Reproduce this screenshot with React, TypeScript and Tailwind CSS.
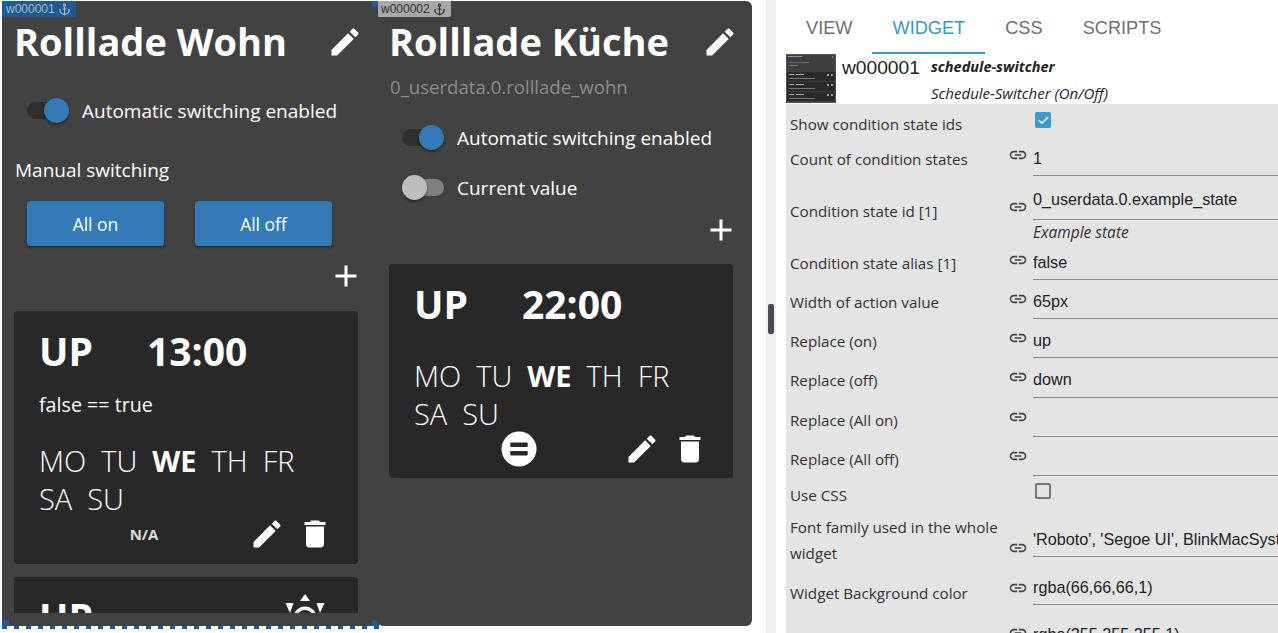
import type { ReactNode } from 'react';
import { Anchor, Check } from 'lucide-react';

const PENCIL = 'M3 17.25V21h3.75L17.81 9.94l-3.75-3.75L3 17.25zM20.71 7.04c.39-.39.39-1.02 0-1.41l-2.34-2.34c-.39-.39-1.02-.39-1.41 0l-1.83 1.83 3.75 3.75 1.83-1.83z';
const TRASH = 'M6 19c0 1.1.9 2 2 2h8c1.1 0 2-.9 2-2V7H6v12zM19 4h-3.5l-1-1h-5l-1 1H5v2h14V4z';
const PLUS = 'M19 13h-6v6h-2v-6H5v-2h6V5h2v6h6v2z';
const LINK = 'M3.9 12c0-1.71 1.39-3.1 3.1-3.1h4V7H7c-2.76 0-5 2.24-5 5s2.24 5 5 5h4v-1.9H7c-1.71 0-3.1-1.39-3.1-3.1zM8 13h8v-2H8v2zm9-6h-4v1.9h4c1.71 0 3.1 1.39 3.1 3.1s-1.39 3.1-3.1 3.1h-4V17h4c2.76 0 5-2.24 5-5s-2.24-5-5-5z';

function Icon({ d, className }: { d: string; className: string }) {
  return (
    <svg viewBox="0 0 24 24" fill="currentColor" className={className}>
      <path d={d} />
    </svg>
  );
}

function Toggle({ on }: { on: boolean }) {
  return (
    <div className="relative h-[25px] w-[42px] shrink-0">
      <div className={`absolute left-0 right-0 top-[4px] h-[17px] rounded-full ${on ? 'bg-[#2f2f2f]' : 'bg-[#808080]'}`} />
      <div
        className={`absolute top-0 h-[25px] w-[25px] rounded-full shadow-[0_2px_3px_rgba(0,0,0,0.4)] ${
          on ? 'right-0 bg-[#337ab7]' : 'left-0 bg-[#bdbdbd]'
        }`}
      />
    </div>
  );
}

function ToggleRow({ on, label }: { on: boolean; label: string }) {
  return (
    <div className="flex h-[50px] items-center gap-[13px] pl-[25px] text-[19px] text-white">
      <Toggle on={on} />
      <span className="pt-[2px]">{label}</span>
    </div>
  );
}

function Sun() {
  return (
    <svg viewBox="0 0 24 24" fill="white" className="ml-[134px] h-[48px] w-[48px]">
      <polygon points="12,0 14.5,3.5 9.5,3.5" />
      <polygon points="2.25,4.5 6.25,4.5 4.5,9.5" />
      <polygon points="21.75,4.5 17.75,4.5 19.5,9.5" />
      <circle cx="12" cy="12" r="4.9" fill="none" stroke="white" strokeWidth="1.75" />
    </svg>
  );
}

function Days() {
  return (
    <div className="mt-[11px] flex w-[270px] flex-wrap gap-x-[15px] text-[29px] font-light leading-[38px] text-white">
      <span>MO</span>
      <span>TU</span>
      <span className="font-bold">WE</span>
      <span>TH</span>
      <span>FR</span>
      <span>SA</span>
      <span>SU</span>
    </div>
  );
}

function ScheduleCard({ time, cond, status }: { time: string; cond?: string; status: ReactNode }) {
  return (
    <div className={`rounded-[4px] bg-[#282828] pl-[25px] ${cond ? 'pb-[12px]' : 'pb-[11px]'}`}>
      <div className="flex h-[82px] items-center pb-[2px] text-[39px] font-bold text-white">
        <span className="w-[108px]">UP</span>
        <span>{time}</span>
      </div>
      {cond && <div className="h-[38px] text-[19.7px] leading-[24px] text-white">{cond}</div>}
      <Days />
      <div className="-ml-[25px] -mt-[2px] flex h-[36px] items-center text-white">
        <div className="flex w-[235px] justify-center pl-[25px]">{status}</div>
        <Icon d={PENCIL} className="h-[36px] w-[36px]" />
        <Icon d={TRASH} className="ml-[12px] h-[36px] w-[36px]" />
      </div>
    </div>
  );
}

function WidgetHeader({ title, sub }: { title: string; sub?: string }) {
  return (
    <>
      <div className="flex h-[72px] items-center justify-between pl-[12px] pr-[14px] text-white">
        <h1 className="pt-[8px] text-[38px] font-bold leading-none">{title}</h1>
        <Icon d={PENCIL} className="mt-[10px] h-[36px] w-[36px]" />
      </div>
      {sub && <div className="h-[27px] pl-[13px] text-[18.6px] leading-[27px] text-[#8c8c8c]">{sub}</div>}
      <div className="h-[12px]" />
    </>
  );
}

function AddButton() {
  return (
    <div className="flex justify-end pr-[13px] text-white">
      <Icon d={PLUS} className="h-[36px] w-[36px]" />
    </div>
  );
}

function Thumbnail() {
  const rows = [18, 28, 38];
  return (
    <svg viewBox="0 0 50 49" className="h-[49px] w-[50px] shrink-0">
      <rect width="50" height="49" fill="#555" />
      <rect x="1" y="1" width="48" height="47" fill="#3e3e3e" />
      <rect x="2" y="2" width="14" height="1" fill="#999" />
      <rect x="46" y="2" width="1" height="2" fill="#888" />
      <rect x="3" y="8" width="20" height="1" fill="#4d6f8f" />
      <rect x="3" y="11" width="9" height="1" fill="#777" />
      {rows.map((y) => (
        <g key={y}>
          <rect x="1" y={y} width="48" height="9" fill="#2a2a2a" />
          <rect x="3" y={y + 2} width="5" height="1" fill="#aaa" />
          <rect x="10" y={y + 2} width="8" height="1" fill="#aaa" />
          <rect x="41" y={y + 2} width="2" height="2" fill="#999" />
          <rect x="45" y={y + 2} width="2" height="2" fill="#999" />
          <rect x="3" y={y + 6} width="26" height="1" fill="#777" />
        </g>
      ))}
    </svg>
  );
}

function TabBar() {
  const tabs = ['VIEW', 'WIDGET', 'CSS', 'SCRIPTS'];
  return (
    <div className="flex h-[54px] font-['Liberation_Sans',sans-serif] text-[18.2px]">
      {tabs.map((t) => (
        <div
          key={t}
          className={`flex items-center border-b-2 px-5 pt-[6px] ${
            t === 'WIDGET' ? 'border-[#3399cc] text-[#3399cc]' : 'border-transparent text-[#6f6f6f]'
          }`}
        >
          {t}
        </div>
      ))}
    </div>
  );
}

type FieldProps = {
  label: string;
  value?: string;
  help?: string;
  rowClass: string;
  labelClass: string;
  linkClass: string;
  inputClass: string;
};

function Field({ label, value, help, rowClass, labelClass, linkClass, inputClass }: FieldProps) {
  return (
    <div className={`grid grid-cols-[222px_25px_1fr] ${rowClass}`}>
      <div className={`pl-1 ${labelClass}`}>{label}</div>
      <div className={linkClass}>
        <Icon d={LINK} className="h-5 w-5 text-[#444]" />
      </div>
      <div className="min-w-0">
        <div
          className={`overflow-hidden whitespace-nowrap border-b border-[#888] font-['Liberation_Sans',sans-serif] text-[16.2px] leading-[20px] text-[#222] ${inputClass}`}
        >
          {value}
        </div>
        {help && <div className="pt-[2px] text-[15.5px] italic leading-[20px] text-[#333]">{help}</div>}
      </div>
    </div>
  );
}

function CheckRow({ label, checked, rowClass, labelClass, boxClass }: { label: string; checked: boolean; rowClass: string; labelClass: string; boxClass: string }) {
  return (
    <div className={`grid grid-cols-[249px_1fr] ${rowClass}`}>
      <div className={`pl-1 ${labelClass}`}>{label}</div>
      <div className={boxClass}>
        {checked ? (
          <div className="flex h-4 w-4 items-center justify-center rounded-[2px] bg-[#3a9bd3] text-white">
            <Check size={13} strokeWidth={2.5} />
          </div>
        ) : (
          <div className="h-4 w-4 rounded-[2px] border-2 border-[#777]" />
        )}
      </div>
    </div>
  );
}

const uniform = {
  rowClass: 'h-[39px]',
  labelClass: 'pt-[12px] leading-[20px]',
  linkClass: 'pt-[9px]',
  inputClass: 'h-[39px] pt-[11px]',
};

export default function App() {
  return (
    <div className="flex h-[633px] w-[1278px] overflow-hidden bg-white font-['Open_Sans',sans-serif]">
      {/* canvas with the two widgets */}
      <div className="flex w-[766px] pl-[2px] pt-[1px]">
        <div className="relative flex h-[625px] w-[375px] flex-col rounded-[6px] bg-[#424242]">
          <div className="absolute left-0 top-0 z-10 flex h-[16px] w-[74px] items-center gap-[3px] rounded-br-[2px] bg-[#1f5a96] pl-[4px] font-['Liberation_Sans',sans-serif] text-[12px] text-[#a9b8c8]">
            w000001
            <Anchor size={13} />
          </div>
          <WidgetHeader title="Rolllade Wohn" />
          <ToggleRow on label="Automatic switching enabled" />
          <div className="mt-[20px] h-[30px] pl-[13px] text-[19px] leading-[30px] text-white">Manual switching</div>
          <div className="mt-[16px] flex gap-[31px] pl-[25px]">
            <button className="h-[45px] w-[137px] rounded-[4px] bg-[#337ab7] pt-[2px] text-[17.5px] text-white shadow-[0_2px_3px_rgba(0,0,0,0.3)]">All on</button>
            <button className="h-[45px] w-[137px] rounded-[4px] bg-[#337ab7] pt-[2px] text-[17.5px] text-white shadow-[0_2px_3px_rgba(0,0,0,0.3)]">All off</button>
          </div>
          <div className="mt-[12px]">
            <AddButton />
          </div>
          <div className="mb-[13px] ml-[12px] mt-[17px] flex min-h-0 w-[344px] flex-1 flex-col gap-[13px] overflow-hidden">
            <ScheduleCard
              time="13:00"
              cond="false == true"
              status={<span className="text-[15px] font-bold text-[#ddd]">N/A</span>}
            />
            <div className="shrink-0 rounded-[4px] bg-[#282828] pl-[25px]">
              <div className="flex h-[82px] items-center text-[39px] font-bold text-white">
                <span className="w-[108px] pb-[2px]">UP</span>
                <Sun />
              </div>
            </div>
          </div>
          {/* selection frame */}
          <div className="absolute bottom-0 right-[-2px] top-0 w-[2px] bg-[repeating-linear-gradient(to_bottom,#1c5a9c_0_6px,transparent_6px_12px)]" />
          <div className="absolute bottom-[-3px] left-0 right-[-2px] h-[3px] bg-[repeating-linear-gradient(to_right,#1c5a9c_0_5px,white_5px_12px)]" />
          <div className="absolute right-[-2px] top-0 h-[6px] w-[7px] bg-[#1c5a9c]" />
          <div className="absolute bottom-0 left-0 h-[6px] w-[7px] bg-[#1c5a9c]" />
          <div className="absolute bottom-0 right-[-2px] h-[6px] w-[7px] bg-[#1c5a9c]" />
        </div>

        <div className="relative flex h-[625px] w-[375px] flex-col rounded-[6px] bg-[#424242]">
          <div className="absolute left-[1px] top-0 z-10 flex h-[16px] w-[73px] items-center gap-[3px] rounded-br-[2px] bg-[#a8a8a8] pl-[3px] font-['Liberation_Sans',sans-serif] text-[12px] text-[#333]">
            w000002
            <Anchor size={13} />
          </div>
          <WidgetHeader title="Rolllade Küche" sub="0_userdata.0.rolllade_wohn" />
          <ToggleRow on label="Automatic switching enabled" />
          <ToggleRow on={false} label="Current value" />
          <AddButton />
          <div className="ml-[12px] mt-[16px] w-[344px]">
            <ScheduleCard
              time="22:00"
              status={
                <svg viewBox="0 0 24 24" fill="white" className="-my-[3px] h-[42px] w-[42px]">
                  <path
                    fillRule="evenodd"
                    d="M12 2a10 10 0 1 0 0 20 10 10 0 0 0 0-20zM7.5 8.3h9a.5.5 0 0 1 .5.5v1.5a.5.5 0 0 1-.5.5h-9a.5.5 0 0 1-.5-.5V8.800a.5.5 0 0 1 .5-.5zm0 4.900h9a.5.5 0 0 1 .5.5v1.500a.5.5 0 0 1-.5.5h-9a.5.5 0 0 1-.5-.5v-1.500a.5.5 0 0 1 .5-.5z"
                  />
                </svg>
              }
            />
          </div>
        </div>
      </div>

      {/* splitter */}
      <div className="flex w-[10px] shrink-0 justify-center bg-[#eef0ef] pt-[304px]">
        <div className="h-[30px] w-[6px] rounded-[2px] bg-[#4a4a55]" />
      </div>

      {/* attribute panel */}
      <div className="min-w-0 flex-1 pl-[10px]">
        <TabBar />
        <div className="flex h-[50px]">
          <Thumbnail />
          <div className="w-[95px] pl-[6px] font-['Liberation_Sans',sans-serif] text-[19.2px] text-[#222]">w000001</div>
          <div className="italic text-[#222]">
            <div className="h-[25px] pt-[2px] text-[14.5px] font-bold">schedule-switcher</div>
            <div className="pt-[3px] text-[15px]">Schedule-Switcher (On/Off)</div>
          </div>
        </div>
        <div className="bg-[#e4e4e4] text-[15.2px] text-[#333]">
          <CheckRow
            label="Show condition state ids"
            checked
            rowClass="h-[37px]"
            labelClass="pt-[10px] leading-[20px]"
            boxClass="pt-[8px]"
          />
          <Field
            label="Count of condition states"
            value="1"
            rowClass="h-[35px]"
            labelClass="pt-[8px] leading-[20px]"
            linkClass="pt-[4px]"
            inputClass="h-[35px] pt-[7px]"
          />
          <Field
            label="Condition state id [1]"
            value="0_userdata.0.example_state"
            help="Example state"
            rowClass="h-[65px]"
            labelClass="pt-[25px] leading-[20px]"
            linkClass="pt-[21px]"
            inputClass="h-[44px] pt-[13px]"
          />
          <Field label="Condition state alias [1]" value="false" {...uniform} />
          <Field label="Width of action value" value="65px" {...uniform} />
          <Field label="Replace (on)" value="up" {...uniform} />
          <Field
            label="Replace (off)"
            value="down"
            rowClass="h-[40px]"
            labelClass={uniform.labelClass}
            linkClass={uniform.linkClass}
            inputClass="h-[40px] pt-[11px]"
          />
          <Field label="Replace (All on)" {...uniform} />
          <Field label="Replace (All off)" {...uniform} />
          <CheckRow label="Use CSS" checked={false} rowClass="h-[39px]" labelClass="pt-[9px] leading-[20px]" boxClass="pt-[7px]" />
          <Field
            label="Font family used in the whole widget"
            value="'Roboto', 'Segoe UI', BlinkMacSystemFont"
            rowClass="h-[52px]"
            labelClass="-mt-[1px] leading-[26px]"
            linkClass="pt-[23px]"
            inputClass="h-[42px] pt-[14px]"
          />
          <Field
            label="Widget Background color"
            value="rgba(66,66,66,1)"
            rowClass="h-[38px]"
            labelClass="pt-[16px] leading-[20px]"
            linkClass="pt-[11px]"
            inputClass="h-[38px] pt-[10px]"
          />
          <Field
            label=""
            value="rgba(255,255,255,1)"
            rowClass="h-[39px]"
            labelClass=""
            linkClass="pt-[18px]"
            inputClass="h-[39px] pt-[19px]"
          />
        </div>
      </div>
    </div>
  );
}
